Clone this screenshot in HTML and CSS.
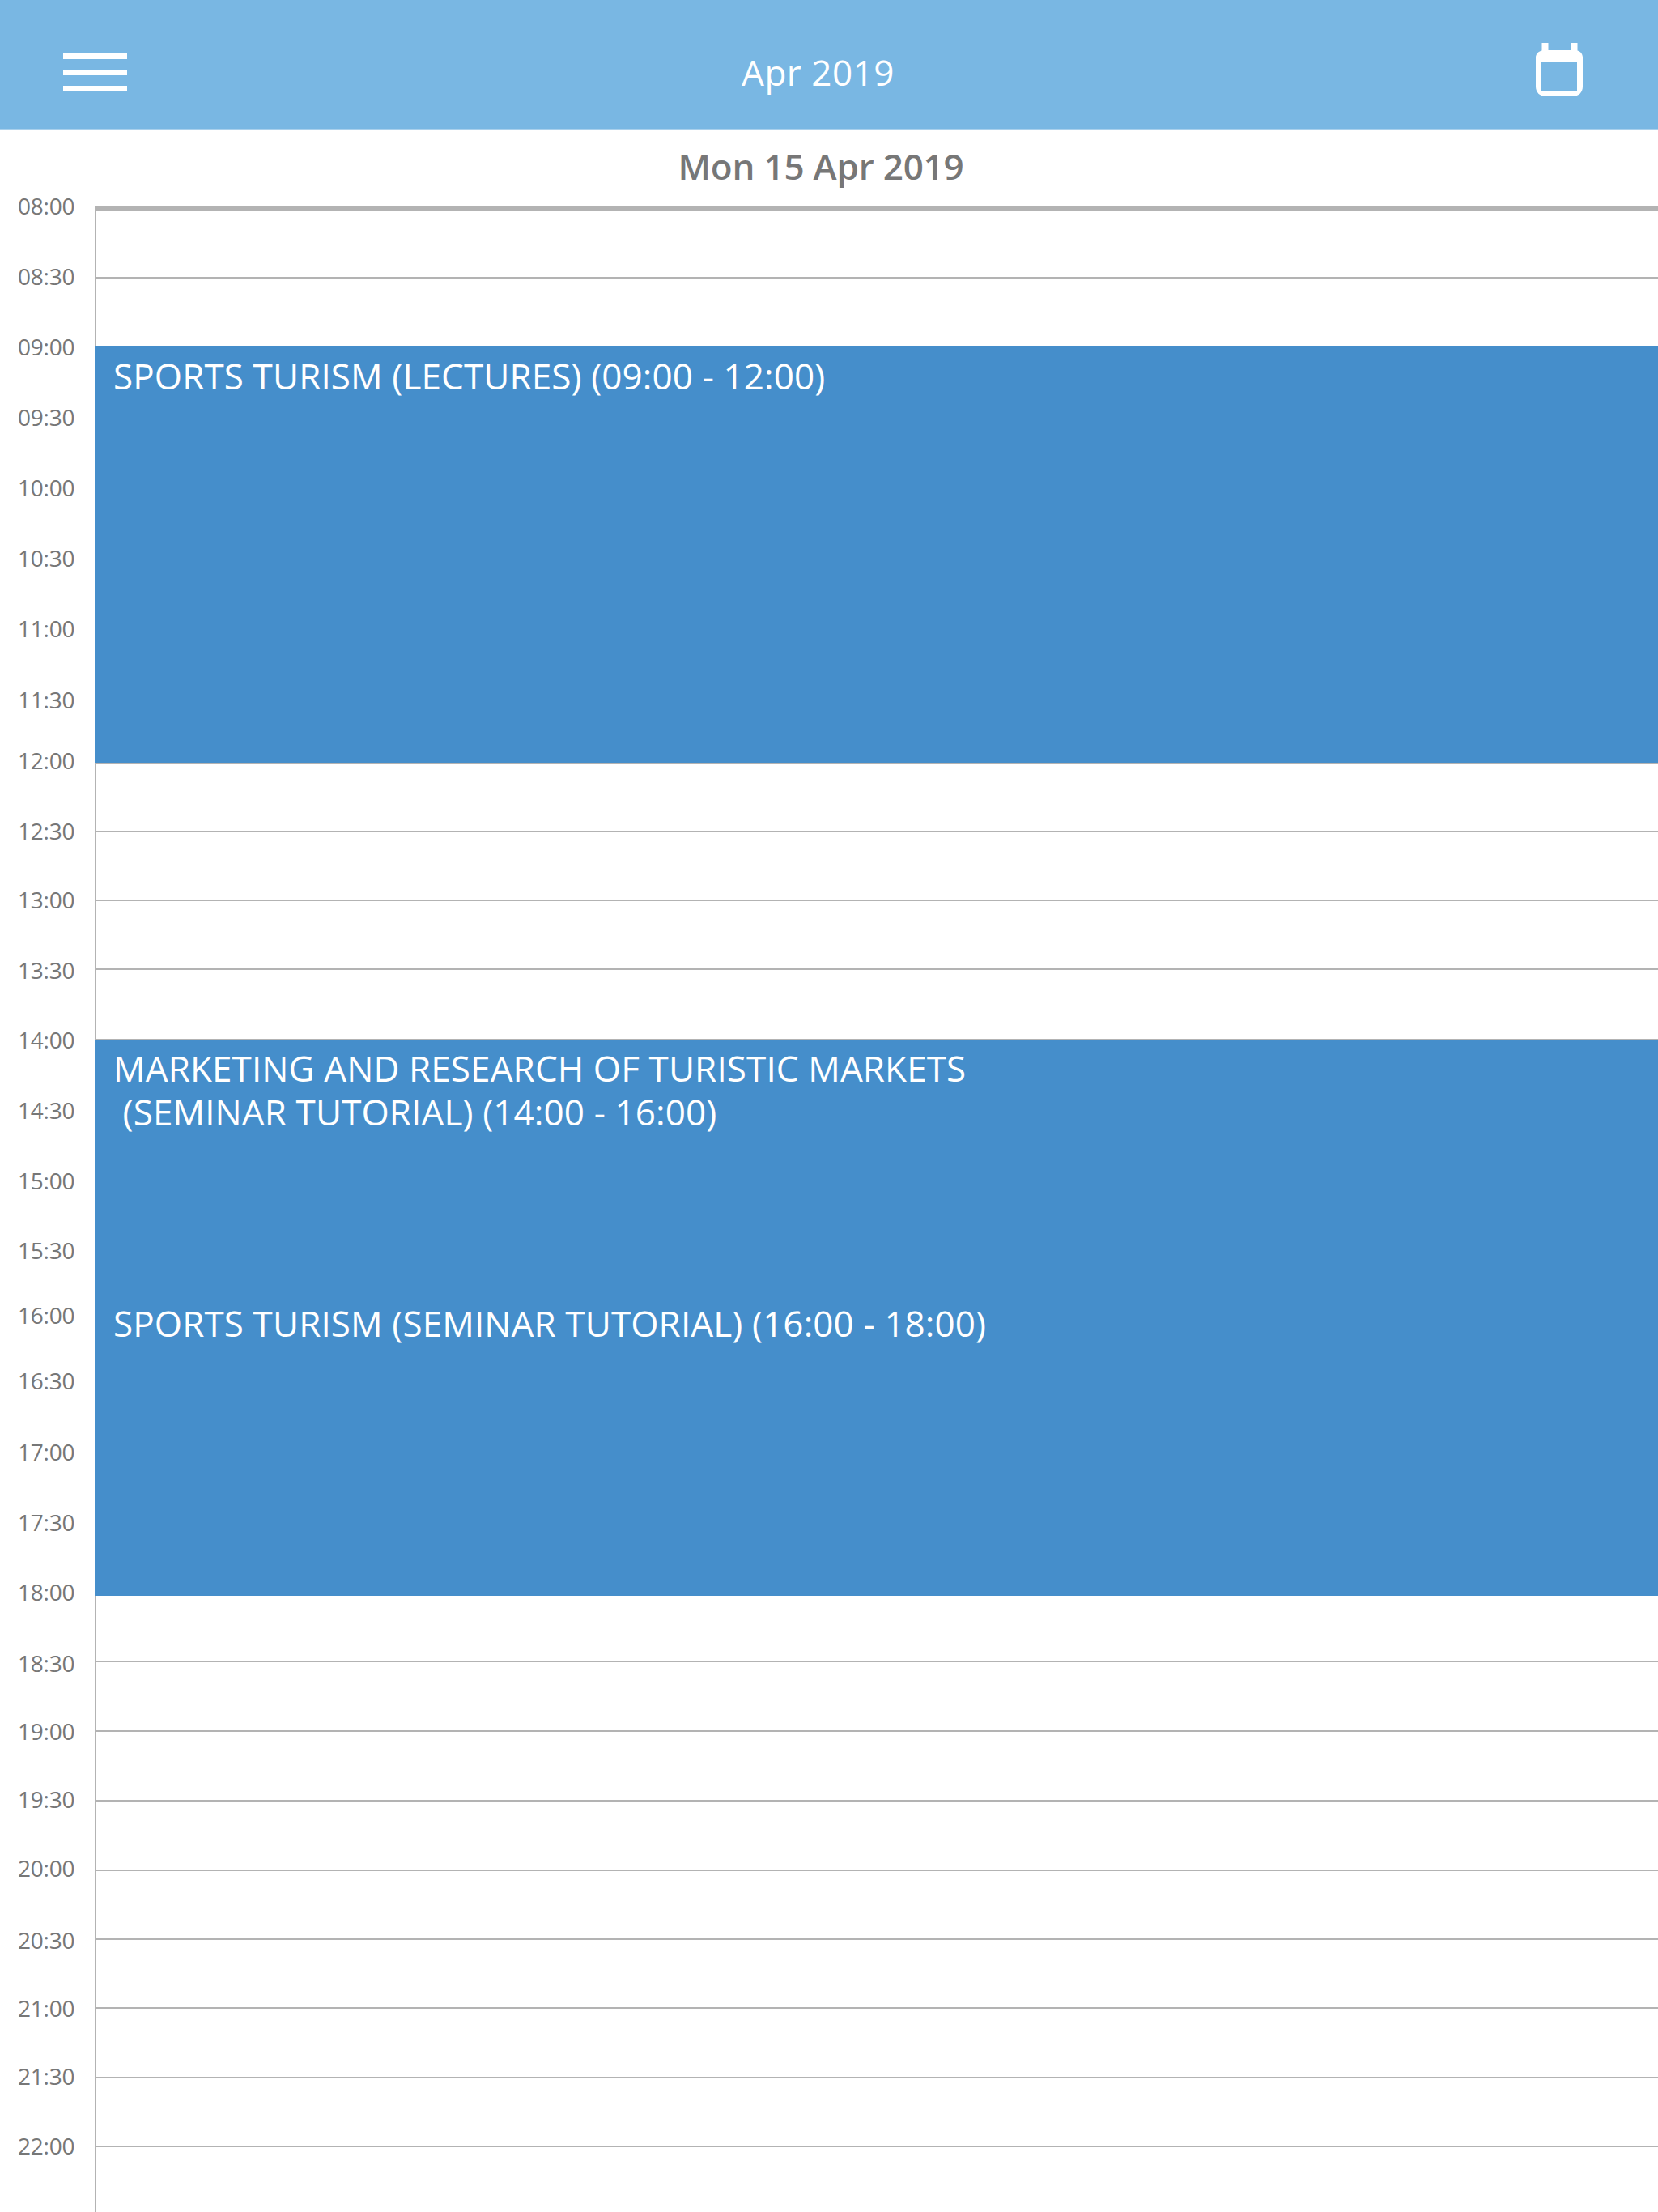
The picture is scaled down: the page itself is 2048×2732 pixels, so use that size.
FILE: index.html
```html
<!DOCTYPE html>
<html lang="en">

<head>
    <meta charset="UTF-8">
    <meta name="viewport" content="width=device-width, initial-scale=1.0">
    <title>Timetable</title>
    <link rel="stylesheet" href="styles.css">
</head>

<body>
    <header class="topbar">
        <div class="menu-icon">
            <span></span>
            <span></span>
            <span></span>
        </div>
        <div class="month">Apr 2019</div>
        <svg class="calendar-icon" width="58" height="66" viewBox="0 0 58 66">
            <path fill="#fff" fill-rule="evenodd" d="M7.500 0h8v9h28V0h8v9.500C55.500 10.500 58 14 58 18v36c0 7-5 12-12 12H12C5 66 0 61 0 54V18c0-4 3-7.500 7.500-8.500zM6 24v35h45V24z"/>
        </svg>
    </header>

    <div class="day-title">Mon 15 Apr 2019</div>

    <div class="day">
        <div class="times">
            <div>08:00</div>
            <div>08:30</div>
            <div>09:00</div>
            <div>09:30</div>
            <div>10:00</div>
            <div>10:30</div>
            <div>11:00</div>
            <div>11:30</div>
            <div>12:00</div>
            <div>12:30</div>
            <div>13:00</div>
            <div>13:30</div>
            <div>14:00</div>
            <div>14:30</div>
            <div>15:00</div>
            <div>15:30</div>
            <div>16:00</div>
            <div>16:30</div>
            <div>17:00</div>
            <div>17:30</div>
            <div>18:00</div>
            <div>18:30</div>
            <div>19:00</div>
            <div>19:30</div>
            <div>20:00</div>
            <div>20:30</div>
            <div>21:00</div>
            <div>21:30</div>
            <div>22:00</div>
        </div>

        <div class="slots">
            <div class="slot"></div>
            <div class="slot slot-plain"></div>
            <div class="event event-lined">SPORTS TURISM (LECTURES) (09:00 - 12:00)</div>
            <div class="slot"></div>
            <div class="slot"></div>
            <div class="slot"></div>
            <div class="slot"></div>
            <div class="event event-tight">MARKETING AND RESEARCH OF TURISTIC MARKETS
 (SEMINAR TUTORIAL) (14:00 - 16:00)</div>
            <div class="event">SPORTS TURISM (SEMINAR TUTORIAL) (16:00 - 18:00)</div>
            <div class="slot"></div>
            <div class="slot"></div>
            <div class="slot"></div>
            <div class="slot"></div>
            <div class="slot"></div>
            <div class="slot"></div>
            <div class="slot"></div>
            <div class="slot"></div>
            <div class="slot slot-plain"></div>
        </div>
    </div>
</body>

</html>
```

FILE: styles.css
```css
body {
    margin: 0;
    height: 2732px;
    overflow: hidden;
    background: #fff;
    font-family: "Open Sans", sans-serif;
}

.topbar {
    display: flex;
    align-items: center;
    justify-content: space-between;
    box-sizing: border-box;
    height: 160px;
    padding: 18px 93px 0 78px;
    background: #79b7e3;
    border-bottom: 1px solid #a9d0ec;
    color: #fff;
}

.menu-icon {
    display: flex;
    flex-direction: column;
    gap: 12.500px;
    width: 79px;
    margin-top: 2px;
}

.menu-icon span {
    height: 7.500px;
    background: #fff;
}

.month {
    margin-right: 33px;
    font-size: 44px;
    line-height: 60px;
    letter-spacing: 0.5px;
}

.calendar-icon {
    margin-top: -5px;
}

.day-title {
    height: 76px;
    padding-right: 20px;
    font-size: 44px;
    font-weight: 600;
    line-height: 90px;
    letter-spacing: -0.2px;
    text-align: center;
    color: #777;
}

.day {
    display: grid;
    grid-template-columns: 117px 1fr;
    height: 2496px;
}

.times {
    display: grid;
    grid-template-rows: 87px 87px 87px 87px 87px 87px 88px 75px 87px 85px 87px 86px 87px 87px 86px 80px 81px 88px 87px 86px 88px 84px 84px 85px 89px 84px 84px 86px 38px;
    margin-top: -1px;
    font-size: 28px;
    line-height: 38px;
    letter-spacing: -0.2px;
    text-indent: 22px;
    color: #777;
}

.slots {
    display: grid;
    grid-template-rows: 84px 83px 516px 85px 85px 85px 87px 312px 374px 82px 86px 86px 86px 85px 85px 86px 85px 1fr;
    margin-top: 19px;
    border-top: 5px solid #b3b3b3;
}

.slot {
    box-sizing: border-box;
    border-left: 2px solid #b3b3b3;
    border-bottom: 2px solid #b3b3b3;
}

.slot-plain {
    border-bottom: 0;
}

.event {
    box-sizing: border-box;
    padding: 10px 0 0 23px;
    background: #458ecb;
    font-size: 44px;
    line-height: 54px;
    letter-spacing: 0.12px;
    white-space: pre-wrap;
    color: #fff;
}

.event-tight {
    padding-top: 7px;
}

.event-lined {
    border-bottom: 1px solid #b3b3b3;
}
```
